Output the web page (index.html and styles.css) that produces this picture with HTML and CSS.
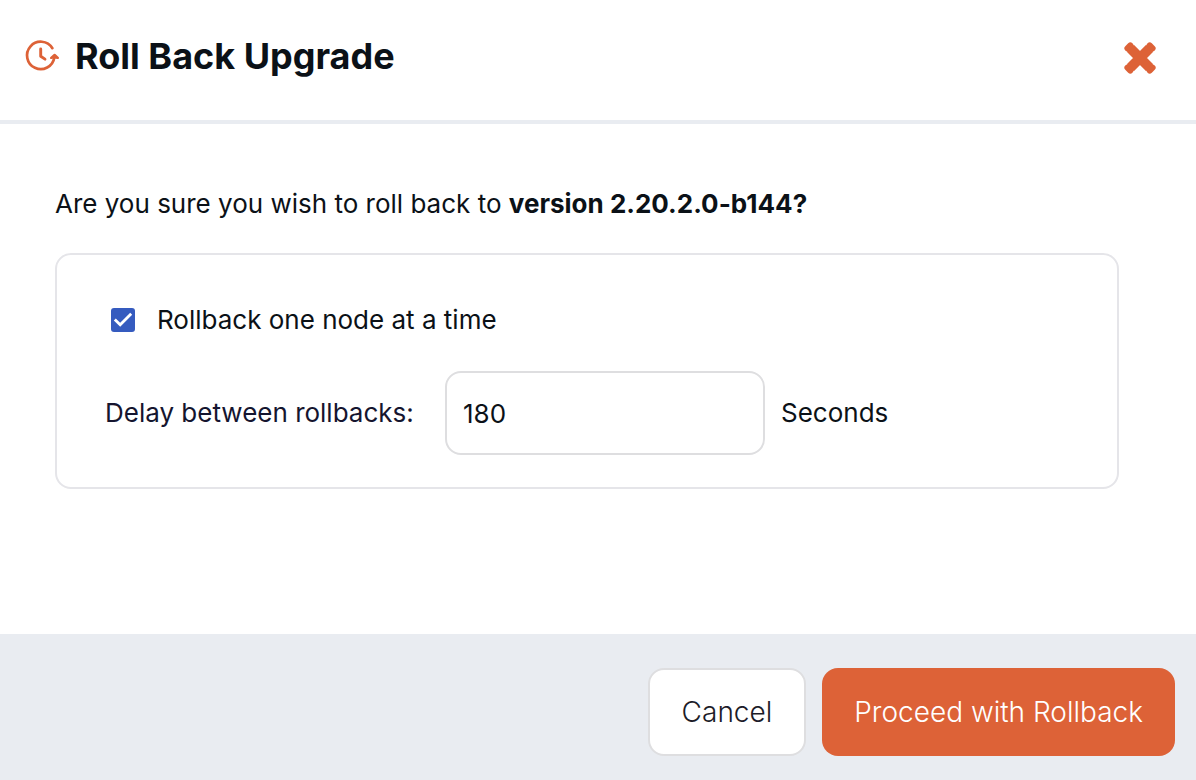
FILE: index.html
```html
<!DOCTYPE html>
<html lang="en">
<head>
<meta charset="utf-8">
<meta name="viewport" content="width=device-width, initial-scale=1">
<title>Roll Back Upgrade</title>
<link rel="stylesheet" href="styles.css">
</head>
<body>
<form class="modal" role="dialog" aria-labelledby="modal-title">
  <header class="modal-header">
    <svg class="title-icon" viewBox="0 0 36 36" aria-hidden="true">
      <path d="M28.4 10.2A13.7 13.7 0 1 0 30.3 19.5" fill="none" stroke="currentColor" stroke-width="2.7" stroke-linecap="round"/>
      <path d="M16.7 11V18.2L21 21.1" fill="none" stroke="currentColor" stroke-width="2.9" stroke-linecap="round" stroke-linejoin="round"/>
      <path d="M27.2 19.9L30.6 17L33.8 19.9L30.4 19.2Z" fill="currentColor" stroke="currentColor" stroke-width="2.4" stroke-linejoin="round"/>
    </svg>
    <h1 class="modal-title" id="modal-title">Roll Back Upgrade</h1>
    <button class="close-button" type="button" aria-label="Close">
      <svg class="close-icon" viewBox="0 0 32 32" aria-hidden="true">
        <path d="M6.3 6.3L25.7 25.7M25.7 6.3L6.3 25.7" stroke="currentColor" stroke-width="10"/>
        <path d="M6.3 3.4L3.4 6.3M25.7 3.4L28.6 6.3M3.4 25.7L6.3 28.6M28.6 25.7L25.7 28.6" stroke="currentColor" stroke-width="6" stroke-linecap="round"/>
      </svg>
    </button>
  </header>
  <main class="modal-body">
    <p class="question">Are you sure you wish to roll back to <strong>version 2.20.2.0-b144?</strong></p>
    <section class="options">
      <div class="option-row check-row">
        <input class="checkbox" type="checkbox" id="rolling" checked>
        <label for="rolling">Rollback one node at a time</label>
      </div>
      <div class="option-row delay-row">
        <label class="delay-label" for="delay">Delay between rollbacks:</label>
        <input class="delay-input" type="text" inputmode="numeric" id="delay" value="180">
        <span class="unit">Seconds</span>
      </div>
    </section>
  </main>
  <footer class="modal-footer">
    <button class="button button-secondary" type="button">Cancel</button>
    <button class="button button-primary" type="submit">Proceed with Rollback</button>
  </footer>
</form>
</body>
</html>
```
FILE: styles.css
```css
* {
  box-sizing: border-box;
}

body {
  margin: 0;
  background: #fff;
  color: #0b1117;
  font-family: Inter, "Liberation Sans", sans-serif;
  font-size: 26px;
  line-height: 32px;
}

.modal {
  display: flex;
  flex-direction: column;
  min-height: 100vh;
}

.modal-header {
  display: flex;
  align-items: center;
  padding: 32px 40px 40px 24px;
  border-bottom: 4px solid #e9ecf1;
}

.title-icon {
  flex: none;
  width: 36px;
  height: 36px;
  margin-right: 15px;
  color: #dd6237;
}

.modal-title {
  flex: 1;
  margin: 0;
  font-size: 36px;
  font-weight: 700;
  line-height: 48px;
}

.close-button {
  display: flex;
  padding: 4px 0 0;
  border: 0;
  background: none;
  color: #dd6237;
  cursor: pointer;
}

.close-icon {
  width: 32px;
  height: 32px;
}

.modal-body {
  flex: 1;
  padding: 64px 77px 48px 55px;
}

.question {
  margin: 0 0 33px;
}

.question strong {
  font-weight: 700;
}

.options {
  padding: 49px 48px 32px;
  border: 2px solid #e5e5e9;
  border-radius: 16px;
}

.option-row {
  display: flex;
  align-items: center;
}

.check-row {
  gap: 22px;
  margin-bottom: 35px;
  padding-left: 6px;
}

.checkbox {
  appearance: none;
  width: 24px;
  height: 24px;
  margin: 0;
  border-radius: 3px;
  background: #355bbf;
}

.checkbox:checked {
  background-image: url("data:image/svg+xml,%3Csvg xmlns='http://www.w3.org/2000/svg' viewBox='0 0 24 24'%3E%3Cpath d='M3.8 11.5L9.2 16.7L20.2 5.8' fill='none' stroke='white' stroke-width='2.8'/%3E%3C/svg%3E");
}

.delay-label {
  flex: none;
  width: 340px;
  color: #15152f;
}

.delay-input {
  width: 320px;
  height: 84px;
  margin-right: 16px;
  padding: 0 16px;
  border: 2px solid #dedee0;
  border-radius: 16px;
  background: #fff;
  color: inherit;
  font: inherit;
}

.modal-footer {
  display: flex;
  justify-content: flex-end;
  gap: 16px;
  padding: 34px 21px 24px;
  background: #e9ecf1;
}

.button {
  height: 88px;
  padding: 0 32px;
  border: 0;
  border-radius: 16px;
  font: inherit;
  font-size: 28px;
  font-weight: 300;
  cursor: pointer;
}

.button-secondary {
  border: 2px solid #dedee0;
  background: #fff;
  color: #1c1c28;
}

.button-primary {
  background: #dd6237;
  color: #fff;
}
```
